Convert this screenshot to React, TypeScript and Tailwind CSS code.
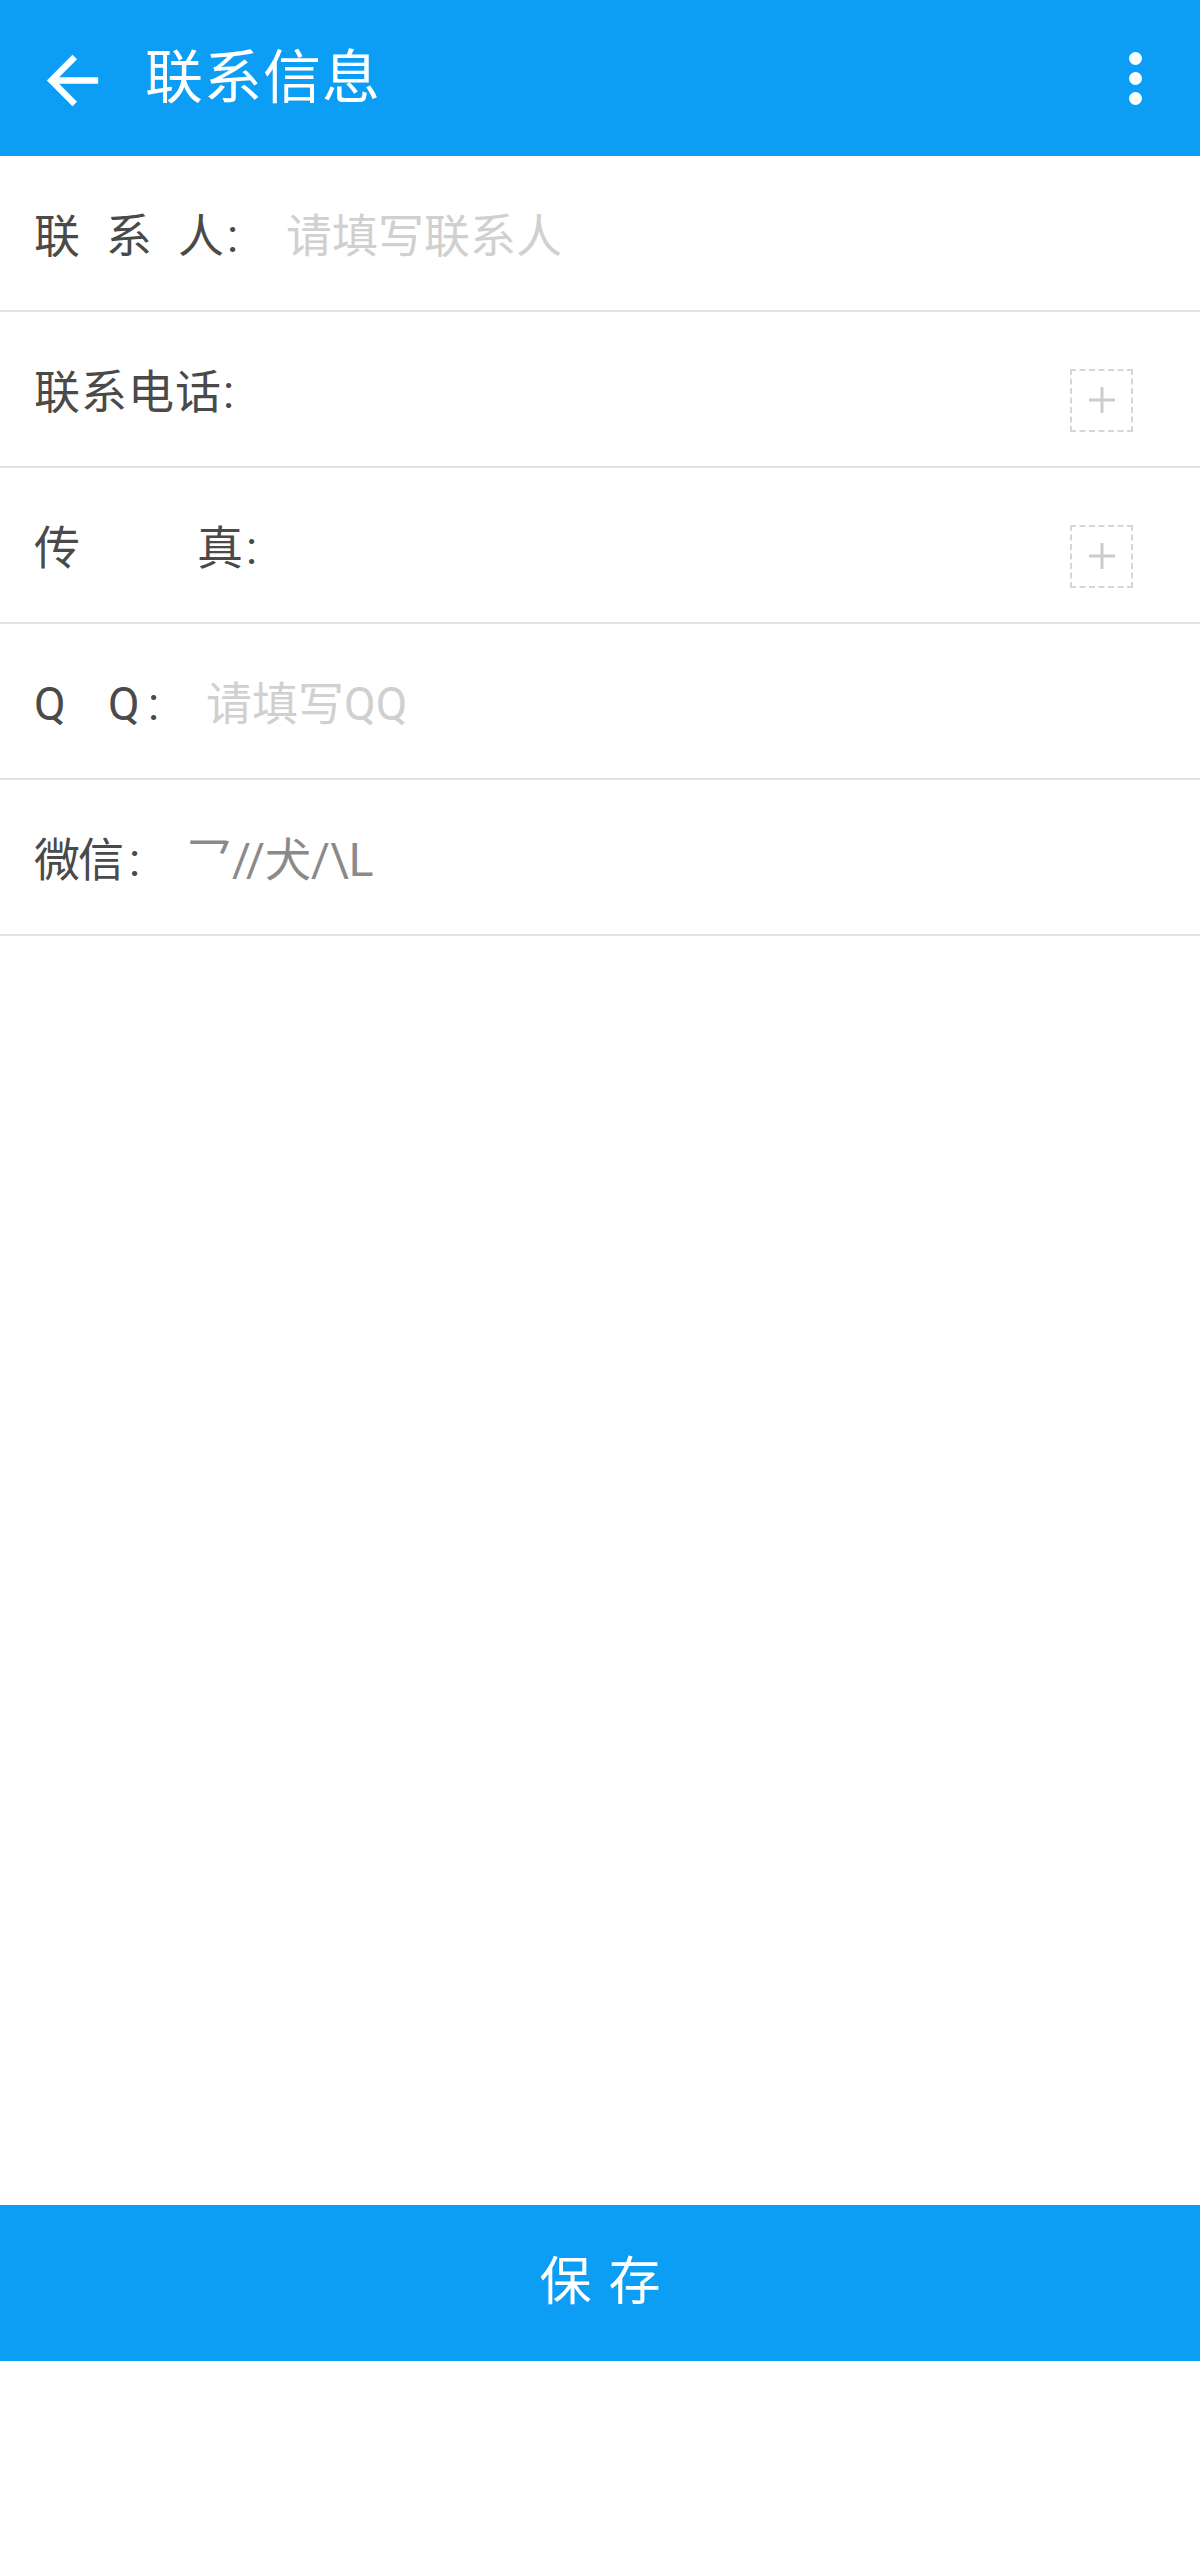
import React from 'react';

type Seg = [string, number];

interface RowProps {
  label: Seg[];
  value?: string;
  valueTone?: 'placeholder' | 'filled';
  addable?: boolean;
}

const Row: React.FC<RowProps> = ({ label, value, valueTone = 'placeholder', addable }) => {
  return (
    <div className="flex items-center h-[156px] border-b-2 border-[#e3e3e3] pl-[34px] pr-[67px]">
      <div className="flex items-center pt-[5px] text-[46px] leading-none text-[#4a4a4a]">
        {label.map(([t, w], i) => (
          <span key={i} className="inline-block whitespace-nowrap" style={{ width: w }}>
            {t}
          </span>
        ))}
      </div>
      {value && (
        <span
          className={`pt-[5px] text-[46px] leading-none whitespace-nowrap ${
            valueTone === 'placeholder' ? 'text-[#d0d0d0]' : 'text-[#8a8a8a]'
          }`}
        >
          {value}
        </span>
      )}
      <div className="flex-1" />
      {addable && (
        <button className="mt-[22px] w-[63px] h-[63px] border-2 border-dashed border-[#d6d6d6] flex items-center justify-center">
          <svg width="28" height="28" viewBox="0 0 28 28">
            <path d="M14 1v26M1 14h26" stroke="#cccccc" strokeWidth="3" fill="none" />
          </svg>
        </button>
      )}
    </div>
  );
};

export default function App() {
  return (
    <div className="w-[1200px] min-h-[2550px] flex flex-col bg-white font-[Roboto,'Noto_Sans_CJK_SC',sans-serif]">
      {/* toolbar */}
      <header className="h-[156px] bg-[#0c9ef5] flex items-center pl-[34px] pr-[58px] text-white">
        <svg width="77" height="77" viewBox="0 0 24 24" className="mt-[4px]">
          <path fill="#ffffff" d="M20 11H7.83l5.59-5.59L12 4l-8 8 8 8 1.41-1.41L7.83 13H20v-2z" />
        </svg>
        <h1 className="ml-[34px] text-[58px] leading-none font-normal tracking-[1px]">联系信息</h1>
        <div className="flex-1" />
        <div className="flex flex-col items-center gap-[7px]">
          <span className="w-[13px] h-[13px] rounded-full bg-white" />
          <span className="w-[13px] h-[13px] rounded-full bg-white" />
          <span className="w-[13px] h-[13px] rounded-full bg-white" />
        </div>
      </header>

      <Row label={[['联', 72], ['系', 72], ['人', 49], [':', 59]]} value="请填写联系人" />
      <Row label={[['联', 47], ['系', 47], ['电', 47], ['话', 48], [':', 20]]} addable />
      <Row label={[['传', 163], ['真', 49], [':', 20]]} addable />
      <Row label={[['Q', 74], ['Q', 40], [':', 58]]} value="请填写QQ" />
      <Row label={[['微', 44], ['信', 51], [':', 57]]} value={'乛//犬/\\L'} valueTone="filled" />

      <div className="flex-1" />

      <button className="h-[156px] bg-[#0c9ef5] flex items-center justify-center gap-[17px] text-white text-[52px] leading-none">
        <span>保</span>
        <span>存</span>
      </button>
      <div className="h-[189px]" />
    </div>
  );
}
